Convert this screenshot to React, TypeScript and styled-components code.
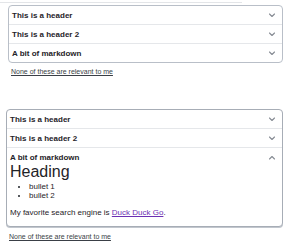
import { useState } from 'react'
import styled, { createGlobalStyle } from 'styled-components'

const GlobalStyle = createGlobalStyle`
  body {
    margin: 0;
    background: #ffffff;
    font-family: 'Liberation Sans', Arial, sans-serif;
    color: #1f2328;
  }
`

type Item = { title: string; body?: 'markdown' }

const items: Item[] = [
  { title: 'This is a header' },
  { title: 'This is a header 2' },
  { title: 'A bit of markdown', body: 'markdown' },
]

const Chevron = ({ up }: { up?: boolean }) => (
  <svg width="8" height="5" viewBox="0 0 8 5">
    <path
      d={up ? 'M1.5 4 L4 1.5 L6.5 4' : 'M1.5 1 L4 3.5 L6.5 1'}
      fill="none"
      stroke="#868b93"
      strokeWidth="1.1"
      strokeLinecap="round"
      strokeLinejoin="round"
    />
  </svg>
)

const Accordion = ({ initialOpen, dark }: { initialOpen?: number; dark?: boolean }) => {
  const [open, setOpen] = useState<number | undefined>(initialOpen)

  return (
    <Box $dark={dark}>
      {items.map((item, i) => (
        <Entry key={item.title} $first={i === 0}>
          <Header onClick={() => setOpen(open === i ? undefined : i)}>
            <span>{item.title}</span>
            <Chevron up={open === i} />
          </Header>
          {open === i && item.body === 'markdown' && (
            <Panel>
              <h1>Heading</h1>
              <ul>
                <li>bullet 1</li>
                <li>bullet 2</li>
              </ul>
              <p>
                My favorite search engine is <a href="#">Duck Duck Go</a>.
              </p>
            </Panel>
          )}
        </Entry>
      ))}
    </Box>
  )
}

const App = () => {
  return (
    <Page>
      <GlobalStyle />
      <TopRule />
      <Section $indent={8}>
        <Accordion />
        <NoneLink href="#">None of these are relevant to me</NoneLink>
      </Section>
      <Section $indent={6} $gap={34}>
        <Accordion initialOpen={2} dark />
        <NoneLink href="#" $gap={6}>None of these are relevant to me</NoneLink>
      </Section>
    </Page>
  )
}

const Page = styled.div`
  width: 289px;
  height: 247px;
  overflow: hidden;
`

const TopRule = styled.div`
  width: 242px;
  height: 1px;
  margin-top: 2px;
  background: #e3e5e8;
`

const Section = styled.div<{ $indent: number; $gap?: number }>`
  display: flex;
  flex-direction: column;
  align-items: flex-start;
  padding-left: ${(p) => p.$indent}px;
  margin-top: ${(p) => p.$gap ?? 2}px;
  width: ${(p) => 283 - p.$indent}px;
`

const Box = styled.div<{ $dark?: boolean }>`
  align-self: stretch;
  border: 1px solid ${(p) => (p.$dark ? '#a7adb6' : '#b9bfc8')};
  border-radius: 4px;
  box-shadow: ${(p) => (p.$dark ? '0 1px 0 #c2c7ce' : 'none')};
  background: #ffffff;
  overflow: hidden;
`

const Entry = styled.div<{ $first: boolean }>`
  border-top: ${(p) => (p.$first ? 'none' : '1px solid #e5e7ea')};
`

const Header = styled.div`
  display: flex;
  align-items: center;
  justify-content: space-between;
  height: 18px;
  padding: 0 6px 0 3px;
  font-size: 8px;
  font-weight: 700;
  color: #1f2328;
  cursor: pointer;
`

const Panel = styled.div`
  padding: 0 3px 8px;
  font-size: 8px;
  color: #1f2328;

  h1 {
    margin: -2px 0 0;
    font-size: 16px;
    font-weight: 400;
    line-height: 16px;
  }

  ul {
    margin: 2px 0 0;
    padding-left: 19px;
    line-height: 9px;
  }

  p {
    margin: 8px 0 0;
    line-height: 10px;
  }

  a {
    color: #6b2fb3;
  }
`

const NoneLink = styled.a<{ $gap?: number }>`
  margin: ${(p) => p.$gap ?? 5}px 0 0 3px;
  font-size: 7px;
  color: #3a3f46;
  text-decoration: underline;
`

export default App
